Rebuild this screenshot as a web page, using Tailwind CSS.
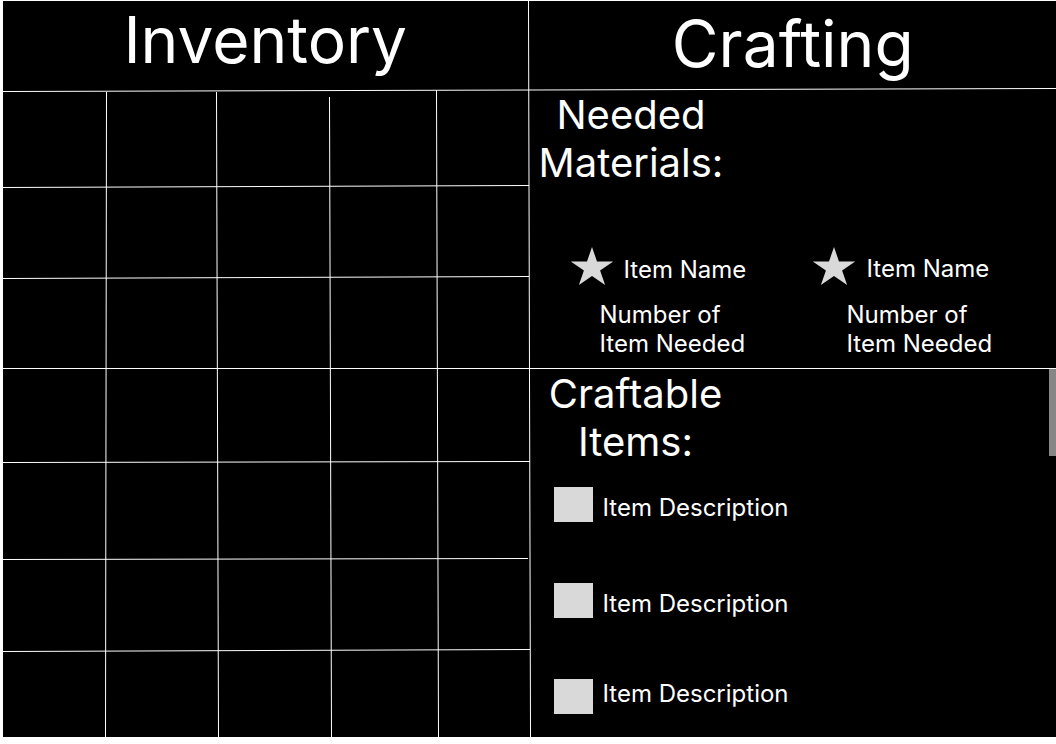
<!DOCTYPE html>
<html lang="en">
<head>
<meta charset="utf-8">
<meta name="viewport" content="width=device-width, initial-scale=1">
<title>Inventory and Crafting</title>
<script src="https://cdn.jsdelivr.net/npm/@tailwindcss/browser@4"></script>
</head>
<body class="flex min-h-screen flex-col bg-white pt-px pb-[7px] pl-[3px] font-['Inter',sans-serif] text-white">
<main class="relative grid grow grid-cols-2 bg-black">
  <!-- Inventory slots and panel dividers -->
  <svg class="pointer-events-none absolute inset-0 h-full w-full" viewBox="3 1 1053 736" preserveAspectRatio="none" fill="none" stroke="#fff" stroke-width="1" aria-hidden="true">
    <path d="M3 91.5L1056 88.5M3 187.5L529 185.5M3 278.5L529 276.5M3 368.5H1056M3 462.5L530 461.5M3 559.5L528 558.5M3 651.5L530 649.5"/>
    <path d="M106.5 92L105.5 737M216.5 92L218.5 737M329.5 97L331.5 737M436.5 90L438.5 737M528.5 1L530.5 737"/>
  </svg>

  <section class="relative" aria-label="Inventory">
    <h1 class="pr-[2px] text-center text-[64px] leading-[78px]">Inventory</h1>
  </section>

  <section class="relative flex flex-col" aria-label="Crafting">
    <h1 class="pt-1 text-center text-[64px] leading-[78px]">Crafting</h1>

    <section class="pt-2 pb-[7px] pl-[9px]">
      <h2 class="w-[185px] text-center text-[40px] leading-12">Needed Materials:</h2>
      <ul class="flex gap-[60px] pt-[60px] pl-[31px] text-2xl leading-[29px]">
        <li class="w-[182px] shrink-0">
          <div class="flex items-start gap-[10px]">
            <svg class="h-[38px] w-11 shrink-0" viewBox="0 0 44 38" fill="#d9d9d9" aria-hidden="true"><path d="M22 0L27 14.5H43.2L30.1 23.5L35.1 38L22 29L8.9 38L13.9 23.5L.8 14.5H17Z"/></svg>
            <span class="pt-2 whitespace-nowrap">Item Name</span>
          </div>
          <p class="pt-[15px] pl-[30px] whitespace-nowrap">Number of<br>Item Needed</p>
        </li>
        <li class="w-[182px] shrink-0">
          <div class="flex items-start gap-[11px]">
            <svg class="h-[38px] w-11 shrink-0" viewBox="0 0 44 38" fill="#d9d9d9" aria-hidden="true"><path d="M22 0L27 14.5H43.2L30.1 23.5L35.1 38L22 29L8.9 38L13.9 23.5L.8 14.5H17Z"/></svg>
            <span class="pt-[7px] whitespace-nowrap">Item Name</span>
          </div>
          <p class="pt-[15px] pl-[35px] whitespace-nowrap">Number of<br>Item Needed</p>
        </li>
      </ul>
    </section>

    <section class="flex grow items-start justify-between pt-1 pl-[18px]">
      <div class="pt-px">
        <h2 class="w-[176px] text-center text-[40px] leading-12">Craftable Items:</h2>
        <ul class="flex flex-col gap-[61px] pt-[21px] pl-[6px] text-2xl leading-[29px]">
          <li class="flex items-end gap-[10px]"><span class="h-[35px] w-[39px] bg-[#d9d9d9]"></span>Item Description</li>
          <li class="flex items-end gap-[10px]"><span class="h-[35px] w-[39px] bg-[#d9d9d9]"></span>Item Description</li>
          <li class="flex items-start gap-[10px]"><span class="h-[35px] w-[39px] bg-[#d9d9d9]"></span>Item Description</li>
        </ul>
      </div>
      <div class="h-[87px] w-[7px] bg-[#868686]"></div>
    </section>
  </section>
</main>
</body>
</html>
